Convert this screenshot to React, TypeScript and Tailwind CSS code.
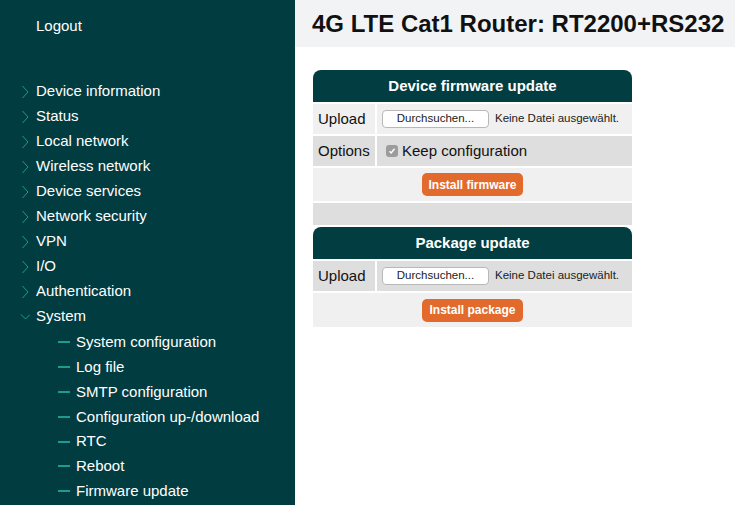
import React from "react";

const menu = [
  "Device information",
  "Status",
  "Local network",
  "Wireless network",
  "Device services",
  "Network security",
  "VPN",
  "I/O",
  "Authentication",
];

const systemItems = [
  "System configuration",
  "Log file",
  "SMTP configuration",
  "Configuration up-/download",
  "RTC",
  "Reboot",
  "Firmware update",
];

const Chevron = ({ open }: { open?: boolean }) => (
  <svg width="10" height="14" viewBox="0 0 10 14" className="shrink-0">
    {open ? (
      <polyline points="1,4.5 5.5,9 10,4.5" fill="none" stroke="#1f9a8e" strokeWidth="1" />
    ) : (
      <polyline points="2.5,1 8,7 2.5,13" fill="none" stroke="#1f9a8e" strokeWidth="1" />
    )}
  </svg>
);

const FileInput = () => (
  <div className="flex items-center gap-[6px]">
    <button className="h-[18px] w-[107px] rounded-[4px] border border-[#b8b8b8] bg-white text-[11.5px] leading-none text-[#222]">
      Durchsuchen...
    </button>
    <span className="text-[11.5px] text-[#222]">Keine Datei ausgewählt.</span>
  </div>
);

const SectionHeader = ({ title }: { title: string }) => (
  <div className="col-span-2 flex h-[32px] items-center justify-center rounded-t-[8px] bg-[#013d41] text-[15px] font-bold text-white">
    {title}
  </div>
);

const ActionButton = ({ label }: { label: string }) => (
  <button className="h-[23px] w-[101px] rounded-[5px] bg-[#e26a2c] text-[12px] font-bold text-white">
    {label}
  </button>
);

export default function App() {
  return (
    <div
      className="flex min-h-screen bg-white"
      style={{ fontFamily: '"Liberation Sans", Arial, sans-serif' }}
    >
      {/* sidebar */}
      <aside className="w-[295px] shrink-0 bg-[#013c41] text-[15px] text-white">
        <div className="h-[52px] pl-[36px] pt-[16px] leading-[20px]">Logout</div>
        <ul className="pt-[27px]">
          {menu.map((m) => (
            <li key={m} className="flex h-[25px] items-center gap-[6px] pl-[20px]">
              <Chevron />
              <span>{m}</span>
            </li>
          ))}
          <li className="flex h-[25px] items-center gap-[6px] pl-[20px]">
            <Chevron open />
            <span>System</span>
          </li>
          <ul className="pt-[1px]">
            {systemItems.map((s) => (
              <li key={s} className="flex h-[24.8px] items-center gap-[6px] pl-[58px]">
                <span className="h-[2px] w-[12px] bg-[#1f9a8e]" />
                <span>{s}</span>
              </li>
            ))}
          </ul>
        </ul>
      </aside>

      {/* main */}
      <main className="flex-1">
        <div className="flex h-[47px] items-center bg-[#f2f3f5] pl-[17px] text-[24px] font-bold text-[#111]">
          4G LTE Cat1 Router: RT2200+RS232
        </div>

        <div className="pl-[18px] pt-[23px]">
          <div className="grid w-[319px] grid-cols-[62px_1fr] gap-[2px] text-[15px] text-[#111]">
            <SectionHeader title="Device firmware update" />

            <div className="flex h-[30px] items-center bg-[#f0f0f0] pl-[5px]">Upload</div>
            <div className="flex h-[30px] items-center bg-[#f0f0f0] pl-[5px]">
              <FileInput />
            </div>

            <div className="flex h-[30px] items-center bg-[#dedede] pl-[5px]">Options</div>
            <div className="flex h-[30px] items-center gap-[4px] bg-[#dedede] pl-[9px]">
              <span className="flex h-[12px] w-[12px] items-center justify-center rounded-[3px] bg-[#9c9c9c]">
                <svg width="8" height="8" viewBox="0 0 8 8">
                  <polyline points="1.5,4.2 3.2,6 6.5,1.8" fill="none" stroke="#fff" strokeWidth="1.4" />
                </svg>
              </span>
              <span>Keep configuration</span>
            </div>

            <div className="col-span-2 flex h-[33px] items-center justify-center bg-[#f0f0f0]">
              <ActionButton label="Install firmware" />
            </div>

            <div className="col-span-2 h-[22px] bg-[#dedede]" />

            <SectionHeader title="Package update" />

            <div className="flex h-[30px] items-center bg-[#dedede] pl-[5px]">Upload</div>
            <div className="flex h-[30px] items-center bg-[#dedede] pl-[5px]">
              <FileInput />
            </div>

            <div className="col-span-2 flex h-[34px] items-center justify-center bg-[#f0f0f0]">
              <ActionButton label="Install package" />
            </div>
          </div>
        </div>
      </main>
    </div>
  );
}
